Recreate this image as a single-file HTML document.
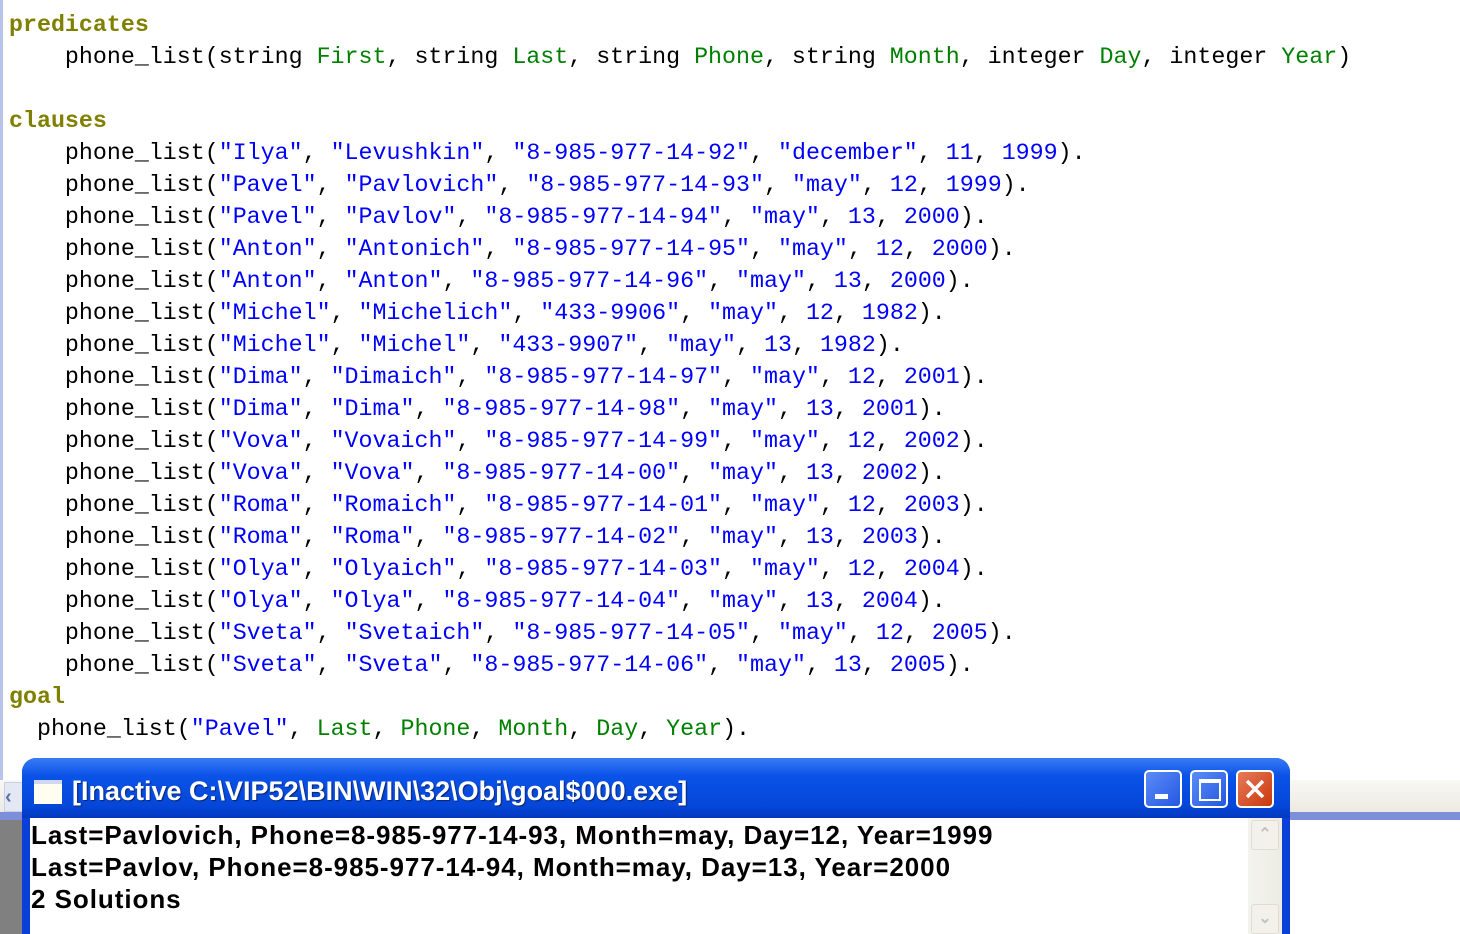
<!DOCTYPE html>
<html><head><meta charset="utf-8"><style>
html,body{margin:0;padding:0;width:1460px;height:934px;overflow:hidden;background:#fff;position:relative}
.code{position:absolute;left:9px;top:9px;font-family:"Liberation Mono",monospace;font-size:23.3px;line-height:32px;white-space:pre;color:#000}
.k{color:#808000;font-weight:bold}.g{color:#008000}.b{color:#0000ff}
.lb{position:absolute;left:0;top:0;width:3px;height:818px;background:#b8c4e8}
.hs{position:absolute;left:0;top:780px;width:1460px;height:32px;background:linear-gradient(#f8f8f4,#eceae2)}
.hl{position:absolute;left:0;top:812px;width:1460px;height:8px;background:#7d8fd8}
.gray{position:absolute;left:0;top:820px;width:24px;height:114px;background:#808080}
.lbtn{position:absolute;left:4px;top:782px;width:20px;height:28px;background:#e4e8f4;border:1px solid #c8d0e8;color:#6070a0;font:bold 20px "Liberation Sans",sans-serif;line-height:28px}
.win{position:absolute;left:22px;top:758px;width:1268px;height:190px;background:#0a3fd8;border-radius:14px 14px 0 0}
.title{position:absolute;left:0;top:0;width:1268px;height:60px;border-radius:14px 14px 0 0;background:linear-gradient(#3a7bf4,#0a52e8 30%,#0547d8 80%,#0438c0)}
.tt{position:absolute;left:50px;top:18px;color:#fff;font:bold 27px "Liberation Sans",sans-serif;text-shadow:1px 1px 1px #0a246a;white-space:pre}
.ico{position:absolute;left:12px;top:22px;width:28px;height:20px;background:#fffef0;border-top:4px solid #cfd8f0}
.btn{position:absolute;top:12px;width:38px;height:38px;border:2px solid #fff;border-radius:5px;box-sizing:border-box}
.content{position:absolute;left:8px;top:60px;width:1252px;height:140px;background:#fff}
.out{position:absolute;left:1px;top:1px;font:bold 26px "Liberation Sans",sans-serif;line-height:32px;white-space:pre;color:#000;letter-spacing:0.95px}
.vs{position:absolute;left:1218px;top:0;width:34px;height:140px;background:linear-gradient(90deg,#f4f4ee,#ecebe4)}
.vb{position:absolute;left:3px;width:26px;height:28px;border:1px solid #e0ded4;border-radius:3px;background:#f2f1ec;color:#c4c2b8;font:bold 16px "Liberation Sans",sans-serif;text-align:center;line-height:28px}
</style></head><body>
<div class="lb"></div>
<div class="code"><span class="k">predicates</span>
    phone_list(string <span class="g">First</span>, string <span class="g">Last</span>, string <span class="g">Phone</span>, string <span class="g">Month</span>, integer <span class="g">Day</span>, integer <span class="g">Year</span>)

<span class="k">clauses</span>
    phone_list(<span class="b">"Ilya"</span>, <span class="b">"Levushkin"</span>, <span class="b">"8-985-977-14-92"</span>, <span class="b">"december"</span>, <span class="b">11</span>, <span class="b">1999</span>).
    phone_list(<span class="b">"Pavel"</span>, <span class="b">"Pavlovich"</span>, <span class="b">"8-985-977-14-93"</span>, <span class="b">"may"</span>, <span class="b">12</span>, <span class="b">1999</span>).
    phone_list(<span class="b">"Pavel"</span>, <span class="b">"Pavlov"</span>, <span class="b">"8-985-977-14-94"</span>, <span class="b">"may"</span>, <span class="b">13</span>, <span class="b">2000</span>).
    phone_list(<span class="b">"Anton"</span>, <span class="b">"Antonich"</span>, <span class="b">"8-985-977-14-95"</span>, <span class="b">"may"</span>, <span class="b">12</span>, <span class="b">2000</span>).
    phone_list(<span class="b">"Anton"</span>, <span class="b">"Anton"</span>, <span class="b">"8-985-977-14-96"</span>, <span class="b">"may"</span>, <span class="b">13</span>, <span class="b">2000</span>).
    phone_list(<span class="b">"Michel"</span>, <span class="b">"Michelich"</span>, <span class="b">"433-9906"</span>, <span class="b">"may"</span>, <span class="b">12</span>, <span class="b">1982</span>).
    phone_list(<span class="b">"Michel"</span>, <span class="b">"Michel"</span>, <span class="b">"433-9907"</span>, <span class="b">"may"</span>, <span class="b">13</span>, <span class="b">1982</span>).
    phone_list(<span class="b">"Dima"</span>, <span class="b">"Dimaich"</span>, <span class="b">"8-985-977-14-97"</span>, <span class="b">"may"</span>, <span class="b">12</span>, <span class="b">2001</span>).
    phone_list(<span class="b">"Dima"</span>, <span class="b">"Dima"</span>, <span class="b">"8-985-977-14-98"</span>, <span class="b">"may"</span>, <span class="b">13</span>, <span class="b">2001</span>).
    phone_list(<span class="b">"Vova"</span>, <span class="b">"Vovaich"</span>, <span class="b">"8-985-977-14-99"</span>, <span class="b">"may"</span>, <span class="b">12</span>, <span class="b">2002</span>).
    phone_list(<span class="b">"Vova"</span>, <span class="b">"Vova"</span>, <span class="b">"8-985-977-14-00"</span>, <span class="b">"may"</span>, <span class="b">13</span>, <span class="b">2002</span>).
    phone_list(<span class="b">"Roma"</span>, <span class="b">"Romaich"</span>, <span class="b">"8-985-977-14-01"</span>, <span class="b">"may"</span>, <span class="b">12</span>, <span class="b">2003</span>).
    phone_list(<span class="b">"Roma"</span>, <span class="b">"Roma"</span>, <span class="b">"8-985-977-14-02"</span>, <span class="b">"may"</span>, <span class="b">13</span>, <span class="b">2003</span>).
    phone_list(<span class="b">"Olya"</span>, <span class="b">"Olyaich"</span>, <span class="b">"8-985-977-14-03"</span>, <span class="b">"may"</span>, <span class="b">12</span>, <span class="b">2004</span>).
    phone_list(<span class="b">"Olya"</span>, <span class="b">"Olya"</span>, <span class="b">"8-985-977-14-04"</span>, <span class="b">"may"</span>, <span class="b">13</span>, <span class="b">2004</span>).
    phone_list(<span class="b">"Sveta"</span>, <span class="b">"Svetaich"</span>, <span class="b">"8-985-977-14-05"</span>, <span class="b">"may"</span>, <span class="b">12</span>, <span class="b">2005</span>).
    phone_list(<span class="b">"Sveta"</span>, <span class="b">"Sveta"</span>, <span class="b">"8-985-977-14-06"</span>, <span class="b">"may"</span>, <span class="b">13</span>, <span class="b">2005</span>).
<span class="k">goal</span>
  phone_list(<span class="b">"Pavel"</span>, <span class="g">Last</span>, <span class="g">Phone</span>, <span class="g">Month</span>, <span class="g">Day</span>, <span class="g">Year</span>).</div>
<div class="hs"></div><div class="hl"></div><div class="gray"></div>
<div class="lbtn">&lsaquo;</div>
<div class="win">
 <div class="title">
  <div class="ico"></div>
  <div class="tt">[Inactive C:\VIP52\BIN\WIN\32\Obj\goal$000.exe]</div>
  <div class="btn" style="left:1122px;background:linear-gradient(135deg,#5a8cf8,#2458e0)"><div style="position:absolute;left:9px;top:22px;width:13px;height:5px;background:#fff"></div></div>
  <div class="btn" style="left:1168px;background:linear-gradient(135deg,#5a8cf8,#2458e0)"><div style="position:absolute;left:7px;top:7px;width:18px;height:16px;border:2px solid #fff;border-top-width:4px"></div></div>
  <div class="btn" style="left:1214px;background:linear-gradient(135deg,#e87a5a,#c8380c)"><svg width="34" height="34" style="position:absolute;left:0;top:0"><path d="M9 9L25 25M25 9L9 25" stroke="#fff" stroke-width="3.5"/></svg></div>
 </div>
 <div class="content">
  <div class="out">Last=Pavlovich, Phone=8-985-977-14-93, Month=may, Day=12, Year=1999
Last=Pavlov, Phone=8-985-977-14-94, Month=may, Day=13, Year=2000
2 Solutions</div>
  <div class="vs"><div class="vb" style="top:2px">&#8963;</div><div class="vb" style="top:86px">&#8964;</div></div>
 </div>
</div>
</body></html>
